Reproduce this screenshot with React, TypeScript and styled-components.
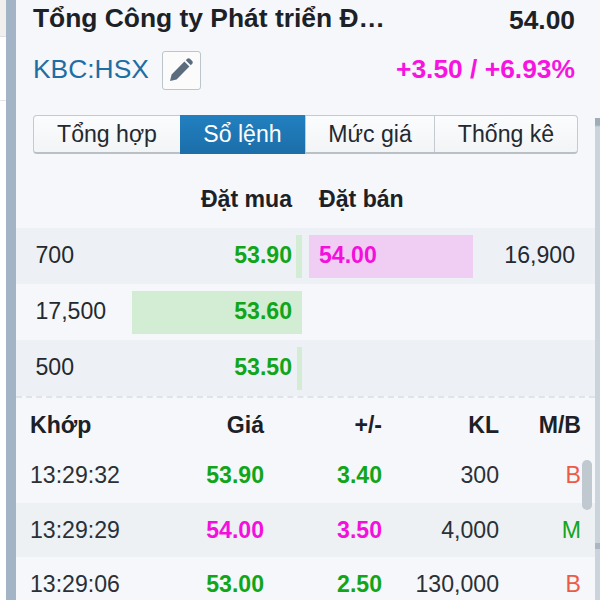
import React from "react";
import styled, { createGlobalStyle } from "styled-components";

const Global = createGlobalStyle`
  html, body { margin: 0; padding: 0; background: #fff; }
  body { font-family: "Liberation Sans", Arial, sans-serif; }
`;

const Page = styled.div`
  width: 600px;
  height: 600px;
  overflow: hidden;
  display: flex;
  background: #fff;
`;
const LeftGutter = styled.div`
  width: 6px;
  flex: none;
  display: flex;
  flex-direction: column;
`;
const GutterTop = styled.div`
  height: 36px;
  background: #f1f0ee;
  border-bottom: 1px solid #e0e0e0;
`;
const GutterLine = styled.div`
  margin-top: 63px;
  height: 1px;
  background: #e6e6e6;
`;
const Rail = styled.div`
  width: 10px;
  flex: none;
  background: #a3b4c6;
`;
const Panel = styled.div`
  width: 579px;
  flex: none;
  background: #f5f7fa;
  position: relative;
`;
const RightGutter = styled.div`
  flex: 1;
  display: flex;
  flex-direction: column;
  background: #f5f7fa;
`;
const RightStrip = styled.div`
  margin-top: 118px;
  flex: 1;
  background: linear-gradient(
    #9fadba 0,
    #9fadba 7px,
    #cbd4dc 9px,
    #cbd4dc 425px,
    #aab6c2 425px,
    #aab6c2 431px,
    #cbd4dc 431px,
    #cbd4dc 100%
  );
`;
const TitleRow = styled.div`
  display: flex;
  justify-content: space-between;
  height: 38px;
  padding: 2px 0 0 17px;
  box-sizing: border-box;
  color: #1c2127;
  font-weight: 700;
  font-size: 26.4px;
  line-height: 33px;
`;
const Title = styled.div`
  white-space: nowrap;
`;
const Price = styled.div`
  padding: 2px 20px 0 0;
`;
const CodeRow = styled.div`
  display: flex;
  align-items: center;
  justify-content: space-between;
  height: 40px;
  margin-top: 11px;
  padding: 0 20px 0 17px;
`;
const CodeLeft = styled.div`
  display: flex;
  align-items: center;
  gap: 13px;
`;
const Code = styled.span`
  font-size: 26.4px;
  color: #1c6ea4;
`;
const EditButton = styled.div`
  width: 39px;
  height: 39px;
  margin-top: 2px;
  box-sizing: border-box;
  border: 1px solid #bcc4cc;
  border-radius: 3px;
  background: #fbfbfb;
  display: flex;
  align-items: center;
  justify-content: center;
`;
const Change = styled.span`
  font-size: 26.4px;
  font-weight: 700;
  color: #f714e0;
`;
const Tabs = styled.div`
  display: flex;
  height: 39px;
  margin: 26px 17px 0 17px;
  box-sizing: border-box;
  border: 1px solid #c4cacf;
  border-bottom: 2px solid #b9c0c6;
  border-radius: 4px;
  background: linear-gradient(#fbfcfd, #f2f4f6);
`;
const Tab = styled.div<{ $w: number; $active?: boolean }>`
  width: ${(p) => p.$w}px;
  flex: none;
  box-sizing: border-box;
  display: flex;
  align-items: center;
  justify-content: center;
  font-size: 23.1px;
  margin: ${(p) => (p.$active ? "-1px 0 -2px" : "0")};
  color: ${(p) => (p.$active ? "#fff" : "#23292f")};
  background: ${(p) => (p.$active ? "linear-gradient(#2280c0, #1b6ea8)" : "transparent")};
  border-left: ${(p) => (p.$active ? "none" : "1px solid #c4cacf")};
  &:first-child { border-left: none; }
  &:last-child { flex: 1; }
`;
const BookHead = styled.div`
  display: grid;
  grid-template-columns: 276px 1fr;
  height: 74px;
  box-sizing: border-box;
  padding-top: 30px;
  font-size: 23.1px;
  line-height: 30px;
  font-weight: 700;
  color: #1c2127;
`;
const BuyHead = styled.div`
  text-align: right;
`;
const SellHead = styled.div`
  padding-left: 27px;
`;
const BookRow = styled.div<{ $alt?: boolean }>`
  display: grid;
  grid-template-columns: 286px 1fr;
  height: 56px;
  background: ${(p) => (p.$alt ? "#edf1f5" : "transparent")};
  font-size: 23.1px;
`;
const BidCell = styled.div`
  position: relative;
  display: flex;
  align-items: center;
  justify-content: space-between;
  padding: 0 10px 2px 19.5px;
  color: #23292f;
`;
const DepthBar = styled.div`
  position: absolute;
  right: 0;
  top: 7px;
  height: 43px;
  background: #d3ecd4;
`;
const Qty = styled.span`
  position: relative;
`;
const BidPrice = styled.span`
  position: relative;
  font-weight: 700;
  color: #11a51a;
`;
const AskCell = styled.div`
  display: flex;
  align-items: center;
  justify-content: space-between;
  padding: 0 20px 2px 7px;
  color: #23292f;
`;
const AskBar = styled.div`
  width: 164px;
  height: 43px;
  margin-top: 2px;
  box-sizing: border-box;
  padding: 0 0 2px 10px;
  display: flex;
  align-items: center;
  background: #f0cdf3;
  color: #f40fdc;
  font-weight: 700;
`;
const Divider = styled.div`
  height: 0;
  border-top: 2px dashed #dfe4e9;
`;
const TradeGrid = styled.div`
  display: grid;
  grid-template-columns: 14px 93px 141px 118px 117px 1fr;
`;
const TradeHead = styled(TradeGrid)`
  height: 50px;
  box-sizing: border-box;
  padding-top: 4px;
  align-items: center;
  font-size: 23.1px;
  font-weight: 700;
  color: #1c2127;
`;
const TradeRow = styled(TradeGrid)<{ $alt?: boolean; $first?: boolean }>`
  height: ${(p) => (p.$first ? 55 : 54)}px;
  box-sizing: border-box;
  padding-bottom: ${(p) => (p.$first ? 1 : 0)}px;
  align-items: center;
  font-size: 23.1px;
  color: #2a3036;
  background: ${(p) => (p.$alt ? "#eef1f4" : "transparent")};
`;
const Cell = styled.div<{ $color?: string; $bold?: boolean }>`
  text-align: right;
  white-space: nowrap;
  color: ${(p) => p.$color || "inherit"};
  font-weight: ${(p) => (p.$bold ? 700 : "inherit")};
`;
const TimeCell = styled.div`
  grid-column: 2;
  white-space: nowrap;
`;
const SideCell = styled(Cell)`
  padding-right: 14px;
`;
const ScrollThumb = styled.div`
  position: absolute;
  right: 3px;
  top: 460px;
  width: 10px;
  height: 50px;
  border-radius: 5px;
  background: #c0c8d0;
`;

const GREEN = "#11a51a";
const PINK = "#f40fdc";
const RED = "#ee5a48";

const trades = [
  { t: "13:29:32", p: "53.90", d: "3.40", v: "300", s: "B", c: GREEN, sc: RED },
  { t: "13:29:29", p: "54.00", d: "3.50", v: "4,000", s: "M", c: PINK, sc: GREEN },
  { t: "13:29:06", p: "53.00", d: "2.50", v: "130,000", s: "B", c: GREEN, sc: RED },
];

export default function App() {
  return (
    <Page>
      <Global />
      <LeftGutter>
        <GutterTop />
        <GutterLine />
      </LeftGutter>
      <Rail />
      <Panel>
        <TitleRow>
          <Title>Tổng Công ty Phát triển Đ…</Title>
          <Price>54.00</Price>
        </TitleRow>
        <CodeRow>
          <CodeLeft>
            <Code>KBC:HSX</Code>
            <EditButton>
              <svg width="24" height="24" viewBox="0 0 24 24">
                <path fill="#5b6c7f" d="M1 23l1.6-6.6L15.4 3.6l5 5L7.6 21.4 1 23zM16.8 2.2l1.4-1.4c.8-.8 2-.8 2.8 0l2.2 2.2c.8.8.8 2 0 2.8l-1.4 1.4-5-5z" />
              </svg>
            </EditButton>
          </CodeLeft>
          <Change>+3.50 / +6.93%</Change>
        </CodeRow>
        <Tabs>
          <Tab $w={146}>Tổng hợp</Tab>
          <Tab $w={125} $active>Sổ lệnh</Tab>
          <Tab $w={129}>Mức giá</Tab>
          <Tab $w={143}>Thống kê</Tab>
        </Tabs>
        <BookHead>
          <BuyHead>Đặt mua</BuyHead>
          <SellHead>Đặt bán</SellHead>
        </BookHead>
        <BookRow $alt>
          <BidCell>
            <DepthBar style={{ width: 6 }} />
            <Qty>700</Qty>
            <BidPrice>53.90</BidPrice>
          </BidCell>
          <AskCell>
            <AskBar>54.00</AskBar>
            <span>16,900</span>
          </AskCell>
        </BookRow>
        <BookRow>
          <BidCell>
            <DepthBar style={{ width: 170 }} />
            <Qty>17,500</Qty>
            <BidPrice>53.60</BidPrice>
          </BidCell>
        </BookRow>
        <BookRow $alt>
          <BidCell>
            <DepthBar style={{ width: 5 }} />
            <Qty>500</Qty>
            <BidPrice>53.50</BidPrice>
          </BidCell>
        </BookRow>
        <Divider />
        <TradeHead>
          <TimeCell>Khớp</TimeCell>
          <Cell>Giá</Cell>
          <Cell>+/-</Cell>
          <Cell>KL</Cell>
          <SideCell>M/B</SideCell>
        </TradeHead>
        {trades.map((r, i) => (
          <TradeRow key={r.t} $alt={i === 1} $first={i === 0}>
            <TimeCell>{r.t}</TimeCell>
            <Cell $color={r.c} $bold>{r.p}</Cell>
            <Cell $color={r.c} $bold>{r.d}</Cell>
            <Cell>{r.v}</Cell>
            <SideCell $color={r.sc}>{r.s}</SideCell>
          </TradeRow>
        ))}
        <ScrollThumb />
      </Panel>
      <RightGutter>
        <RightStrip />
      </RightGutter>
    </Page>
  );
}
